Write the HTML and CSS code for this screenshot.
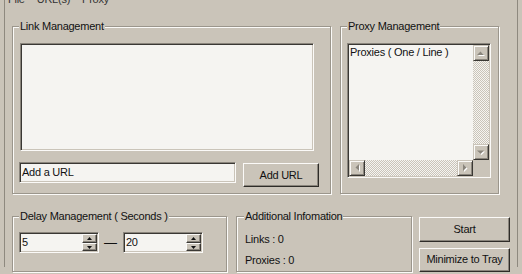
FILE: index.html
```html
<!DOCTYPE html>
<html lang="en">
    <head>
        <meta charset="UTF-8">
        <title>Proxy Tool</title>
        <link rel="stylesheet" href="styles.css">
    </head>
    <body>
        <div class="window">
            <div class="menu">
                <span>File</span>
                <span>URL(s)</span>
                <span>Proxy</span>
            </div>
            <div class="row row-top">
                <div class="group link-group">
                    <div class="group-title">Link Management</div>
                    <div class="sunken listbox"></div>
                    <div class="url-row">
                        <div class="sunken url-box"><span>Add a URL</span></div>
                        <div class="button add-btn">Add URL</div>
                    </div>
                </div>
                <div class="group proxy-group">
                    <div class="group-title">Proxy Management</div>
                    <div class="sunken proxy-box">
                        <div class="proxy-text">Proxies ( One / Line )</div>
                        <div class="vscroll">
                            <div class="sbtn">
                                <svg width="14" height="14" viewBox="0 0 14 14"><polygon points="4,10 11,10 7.5,6.5" fill="#fff"/><polygon points="3,9 10,9 6.5,5.5" fill="#8a857c"/></svg>
                            </div>
                            <div class="track"></div>
                            <div class="sbtn">
                                <svg width="14" height="14" viewBox="0 0 14 14"><polygon points="4,6.5 11,6.5 7.5,10" fill="#fff"/><polygon points="3,5.5 10,5.5 6.5,9" fill="#8a857c"/></svg>
                            </div>
                        </div>
                        <div class="hscroll">
                            <div class="sbtn">
                                <svg width="14" height="14" viewBox="0 0 14 14"><polygon points="6.5,7.5 10,4 10,11" fill="#fff"/><polygon points="5.5,6.5 9,3 9,10" fill="#8a857c"/></svg>
                            </div>
                            <div class="track"></div>
                            <div class="sbtn">
                                <svg width="14" height="14" viewBox="0 0 14 14"><polygon points="6,4 6,11 9.5,7.5" fill="#fff"/><polygon points="5,3 5,10 8.5,6.5" fill="#8a857c"/></svg>
                            </div>
                        </div>
                        <div class="corner"></div>
                    </div>
                </div>
            </div>
            <div class="row row-bottom">
                <div class="group delay-group">
                    <div class="group-title">Delay Management ( Seconds )</div>
                    <div class="spin-row">
                        <div class="sunken spin">
                            <span class="spin-val">5</span>
                            <div class="spin-btns">
                                <div class="spbtn up"><svg width="5" height="3" viewBox="0 0 5 3"><polygon points="0,3 5,3 2.5,0" fill="#111"/></svg></div>
                                <div class="spbtn down"><svg width="5" height="3" viewBox="0 0 5 3"><polygon points="0,0 5,0 2.5,3" fill="#111"/></svg></div>
                            </div>
                        </div>
                        <span class="dash">—</span>
                        <div class="sunken spin">
                            <span class="spin-val">20</span>
                            <div class="spin-btns">
                                <div class="spbtn up"><svg width="5" height="3" viewBox="0 0 5 3"><polygon points="0,3 5,3 2.5,0" fill="#111"/></svg></div>
                                <div class="spbtn down"><svg width="5" height="3" viewBox="0 0 5 3"><polygon points="0,0 5,0 2.5,3" fill="#111"/></svg></div>
                            </div>
                        </div>
                    </div>
                </div>
                <div class="group info-group">
                    <div class="group-title">Additional Infomation</div>
                    <div class="info-line first">Links : 0</div>
                    <div class="info-line">Proxies : 0</div>
                </div>
                <div class="actions">
                    <div class="button">Start</div>
                    <div class="button">Minimize to Tray</div>
                </div>
            </div>
        </div>
    </body>
</html>
```

FILE: styles.css
```css
body {
    margin: 0;
    width: 522px;
    height: 274px;
    overflow: hidden;
    background: #cac4b9;
    font-family: "Liberation Sans", Arial, sans-serif;
    font-size: 11px;
    line-height: 13px;
    letter-spacing: -0.25px;
    color: #111;
}
.window {
    box-sizing: border-box;
    margin-left: 4px;
    width: 514px;
    height: 274px;
    border-left: 1px solid #8e897f;
    border-right: 1px solid #8e897f;
    padding-left: 7px;
}
.menu {
    display: flex;
    gap: 12px;
    height: 13px;
    margin-top: -7px;
    margin-left: -4px;
    color: #333;
}
.row {
    display: flex;
}
.row-top {
    margin-top: 20px;
    gap: 9px;
    height: 168px;
}
.row-bottom {
    margin-top: 22px;
    height: 56px;
}
.group {
    box-sizing: border-box;
    height: 100%;
    border: 1px solid #9b968c;
    box-shadow: inset 1px 1px 0 #fbfaf8, 1px 1px 0 #fbfaf8;
    padding-left: 6px;
}
.group-title {
    width: fit-content;
    margin-top: -7px;
    padding: 0 1px;
    background: #cac4b9;
    white-space: nowrap;
}
.sunken {
    box-sizing: border-box;
    padding: 1px;
    background: #f5f4f1;
    border: 1px solid;
    border-color: #8a857c #fbfaf8 #fbfaf8 #8a857c;
    box-shadow: inset 1px 1px 0 #3a3834, inset -1px -1px 0 #cac4b9;
}
.button {
    box-sizing: border-box;
    display: flex;
    align-items: center;
    justify-content: center;
    background: #cac4b9;
    border: 1px solid;
    border-color: #fbfaf8 #2e2c28 #2e2c28 #fbfaf8;
    box-shadow: inset -1px -1px 0 #8a857c;
    white-space: nowrap;
}

/* link management */
.link-group {
    width: 319px;
}
.listbox {
    margin-top: 10px;
    margin-left: 1px;
    width: 294px;
    height: 108px;
}
.url-row {
    display: flex;
    align-items: flex-start;
    margin-top: 11px;
}
.url-box {
    display: flex;
    align-items: center;
    width: 217px;
    height: 21px;
    padding-left: 2px;
}
.add-btn {
    margin-left: 7px;
    margin-top: 1px;
    width: 76px;
    height: 24px;
}

/* proxy management */
.proxy-group {
    width: 159px;
}
.proxy-box {
    display: grid;
    grid-template-columns: 1fr 16px;
    grid-template-rows: 1fr 16px;
    margin-top: 10px;
    width: 144px;
    height: 135px;
}
.proxy-text {
    padding: 1px 0 0 1px;
    white-space: nowrap;
    overflow: hidden;
}
.vscroll {
    display: flex;
    flex-direction: column;
}
.hscroll {
    display: flex;
}
.track {
    flex: 1;
    background: repeating-conic-gradient(#f5f4f1 0 25%, #cac4b9 0 50%) 0 0 / 2px 2px;
}
.corner {
    background: #cac4b9;
}
.sbtn {
    box-sizing: border-box;
    width: 16px;
    height: 16px;
    background: #cac4b9;
    border: 1px solid;
    border-color: #cac4b9 #3a3834 #3a3834 #cac4b9;
    box-shadow: inset 1px 1px 0 #fbfaf8, inset -1px -1px 0 #8a857c;
}
.sbtn svg {
    display: block;
}

/* delay management */
.delay-group {
    width: 215px;
    margin-right: 9px;
}
.spin-row {
    display: flex;
    align-items: center;
    margin-top: 9px;
}
.spin {
    display: flex;
    align-items: center;
    width: 80px;
    height: 21px;
}
.spin-val {
    flex: 1;
    padding-left: 1px;
}
.spin-btns {
    display: flex;
    flex-direction: column;
    align-self: stretch;
    width: 15px;
}
.spbtn {
    box-sizing: border-box;
    display: flex;
    align-items: center;
    justify-content: center;
    height: 9px;
    background: #cac4b9;
    border: 1px solid;
    border-color: #fbfaf8 #3a3834 #3a3834 #fbfaf8;
    box-shadow: inset -1px -1px 0 #8a857c;
}
.spbtn.down {
    height: 8px;
}
.spbtn svg {
    display: block;
}
.dash {
    margin: -1px 6px 0 5px;
    font-size: 13px;
    letter-spacing: 0;
}

/* info */
.info-group {
    width: 176px;
    margin-right: 7px;
    padding-left: 8px;
}
.info-group .group-title {
    margin-left: -1px;
}
.info-line {
    margin-top: 8px;
}
.info-line.first {
    margin-top: 10px;
}
.actions {
    display: flex;
    flex-direction: column;
    gap: 6px;
    margin-top: 1px;
    width: 91px;
}
.actions .button {
    height: 25px;
}
```
